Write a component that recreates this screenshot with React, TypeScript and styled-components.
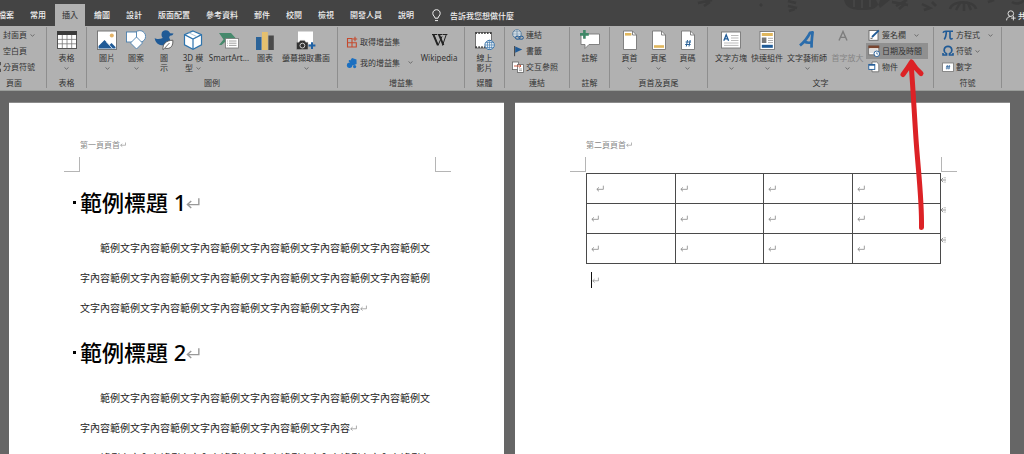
import React from "react";
import styled, { createGlobalStyle, css } from "styled-components";

const GlobalStyle = createGlobalStyle`
  *, *::before, *::after { box-sizing: border-box; }
  html, body { margin: 0; padding: 0; }
  body {
    font-family: "Noto Sans", "Noto Sans CJK TC", sans-serif;
    font-size: 8px;
    color: #333;
    background: #666;
  }
  button { font: inherit; color: inherit; }
`;

/* ---------- Window ---------- */

const Window = styled.div`
  display: flex;
  flex-direction: column;
  height: 100vh;
  overflow: hidden;
  background: #666;
`;

const TitleBar = styled.header`
  position: relative;
  display: flex;
  align-items: stretch;
  justify-content: space-between;
  height: 26px;
  padding-top: 4px;
  overflow: hidden;
  background: #444;
  color: #f0f0f0;
`;

const TabList = styled.nav`
  display: flex;
  margin-left: -10px;
`;

const Tab = styled.button<{ $active?: boolean }>`
  margin: 0 1px;
  padding: 0 7px;
  border: 0;
  background: ${(p) => (p.$active ? "#b1b1b1" : "transparent")};
  color: ${(p) => (p.$active ? "#444" : "#f0f0f0")};
  font-weight: 500;
  line-height: 22px;
  white-space: nowrap;
`;

const BarButton = styled.button<{ $cut?: boolean }>`
  display: flex;
  align-items: center;
  gap: 9px;
  margin-left: 10px;
  padding: 0;
  border: 0;
  background: transparent;
  font-weight: 500;
  white-space: nowrap;
  ${(p) =>
    p.$cut &&
    css`
      gap: 2px;
      margin-right: -10px;
      z-index: 1;
    `}
`;

const Doodles = styled.svg`
  position: absolute;
  top: 0;
  right: 0;
`;

/* ---------- Ribbon ---------- */

const Ribbon = styled.div`
  display: flex;
  padding: 1px 0 2px;
  background: #b1b1b1;
  border-bottom: 1px solid #9a9d9a;
`;

const Group = styled.section<{ $w: number; $cut?: boolean }>`
  display: flex;
  flex-direction: column;
  flex: 0 0 ${(p) => p.$w}px;
  height: 61px;
  border-right: 1px solid #8e8e8e;
  margin-left: ${(p) => (p.$cut ? "-18px" : "0")};
`;

const GroupBody = styled.div<{ $pad?: number }>`
  display: flex;
  height: 51px;
  padding-left: ${(p) => p.$pad ?? 0}px;
`;

const GroupLabel = styled.div`
  line-height: 10px;
  text-align: center;
`;

const BigButton = styled.button<{ $w: number }>`
  display: flex;
  flex-direction: column;
  align-items: center;
  width: ${(p) => p.$w}px;
  padding: 3px 0 0;
  border: 0;
  background: transparent;
  line-height: 10px;
  white-space: nowrap;
  &:disabled { color: #858585; }
`;

const IconSlot = styled.span`
  display: flex;
  align-items: center;
  justify-content: center;
  height: 20px;
  margin-bottom: 3px;
`;

const ChevronRow = styled.span`
  display: flex;
  align-items: center;
  justify-content: center;
  gap: 3px;
  height: 10px;
`;

const SmallColumn = styled.div<{ $top?: number }>`
  display: flex;
  flex-direction: column;
  padding-top: ${(p) => p.$top ?? 0}px;
`;

const SmallButton = styled.button<{ $h?: number; $hot?: boolean; $far?: boolean }>`
  position: relative;
  display: flex;
  align-items: center;
  height: ${(p) => p.$h ?? 16}px;
  padding: 0 6px 0 2px;
  border: 0;
  background: ${(p) => (p.$hot ? "#909090" : "transparent")};
  line-height: 10px;
  white-space: nowrap;
  & > span { margin: 0 ${(p) => (p.$far ? 8 : 3)}px 0 2px; }
  ${(p) => p.$hot && "padding-right: 3px;"}
`;

const Pointer = styled.svg`
  position: absolute;
  left: 32px;
  top: 14px;
  z-index: 5;
  pointer-events: none;
`;

/* ---------- Document ---------- */

const Workspace = styled.main`
  display: grid;
  grid-template-columns: 1fr 1fr;
  gap: 11px;
  flex: 1;
  min-height: 0;
  padding: 11px 14px 0 9px;
`;

const Page = styled.article`
  padding: 36px 69px 0 71px;
  background: #fff;
  border-top: 1px solid #8b8b8b;
  color: #222;
`;

const PageHeader = styled.div`
  color: #8a8a8a;
  line-height: 12px;
`;

const CropMarks = styled.div`
  display: flex;
  justify-content: space-between;
  height: 15px;
  margin: 6px -16px 0;
  padding: 0;
`;

const Corner = styled.span<{ $side: "left" | "right" }>`
  width: 16px;
  border: 0 solid #b5b5b5;
  border-width: ${(p) => (p.$side === "left" ? "0 1px 1px 0" : "0 0 1px 1px")};
`;

const PageBody = styled.div`
  display: flow-root;
  padding-top: 1px;
`;

const Heading = styled.h1`
  position: relative;
  margin: 12px 0 14px;
  color: #000;
  font-size: 22px;
  font-weight: 500;
  line-height: 34px;
  white-space: nowrap;
  &::before {
    content: "";
    position: absolute;
    left: -7px;
    top: 16px;
    width: 3px;
    height: 3px;
    background: #000;
  }
`;

const Paragraph = styled.p`
  margin: 0;
  font-size: 10px;
  line-height: 30px;
  text-indent: 20px;
`;

const DocTable = styled.table`
  width: 100%;
  border-collapse: collapse;
  table-layout: fixed;
`;

const Cell = styled.td<{ $indent?: boolean }>`
  position: relative;
  height: 30px;
  padding: 3px 0 0 ${(p) => (p.$indent ? 9 : 4)}px;
  border: 1px solid #4a4a4a;
  line-height: 10px;
`;

const RowEnd = styled.span`
  position: absolute;
  left: 100%;
  top: 2px;
`;

const CaretLine = styled.p`
  display: flex;
  align-items: center;
  width: 12px;
  height: 16px;
  margin: 8px 0 0 5px;
  border-left: 1px solid #111;
`;

/* ---------- Glyphs ---------- */

const Chevron = () => (
  <svg width="5" height="3" viewBox="0 0 5 3" aria-hidden="true">
    <path d="M0.5 0.5 L2.5 2.2 L4.5 0.5" fill="none" stroke="#666" strokeWidth="0.9" />
  </svg>
);

const ReturnMark = ({ size = 8, color = "#888" }: { size?: number; color?: string }) => (
  <svg width={size} height={size} viewBox="0 0 12 12" aria-hidden="true">
    <path d="M11 1 V6.5 H1.5 M4.5 3.5 L1.2 6.5 L4.5 9.5" fill="none" stroke={color} strokeWidth="1.2" />
  </svg>
);

const EndMark = () => (
  <svg width="7" height="8" viewBox="0 0 7 8" aria-hidden="true">
    <path d="M6 4 H1 M3.2 1.8 L1 4 L3.2 6.2 M5 1.2 V2.4 M5 5.6 V6.6" fill="none" stroke="#888" strokeWidth="0.9" />
  </svg>
);

const Svg = ({ w = 20, h = 20, children }: { w?: number; h?: number; children: React.ReactNode }) => (
  <svg width={w} height={h} viewBox={`0 0 ${w} ${h}`} fill="none" aria-hidden="true">
    {children}
  </svg>
);

const TableIcon = () => (
  <Svg>
    <rect x="0.5" y="1.5" width="19" height="17" fill="#fff" stroke="#555" />
    <rect x="0" y="1" width="20" height="4" fill="#3a3a3a" />
    <path d="M5.3 5 V18 M10 5 V18 M14.7 5 V18 M1 9.4 H19 M1 13.8 H19" stroke="#777" strokeWidth="0.8" />
  </Svg>
);
const PictureIcon = () => (
  <Svg>
    <rect x="0.5" y="1" width="19" height="18.5" fill="#fff" stroke="#777" />
    <circle cx="14.8" cy="5.5" r="2" fill="#e3b265" />
    <path d="M1.5 18.5 V16 L7.5 10 L12.5 15 L14.5 13 L18.5 17 V18.5 Z" fill="#1f5a96" />
    <path d="M9.5 12 L15.5 18.5" stroke="#fff" strokeWidth="0.8" />
  </Svg>
);
const ShapesIcon = () => (
  <Svg>
    <circle cx="13.8" cy="6.4" r="5.8" fill="#fff" stroke="#4a7fae" strokeWidth="0.9" />
    <rect x="0.5" y="2" width="10" height="10" fill="#fff" stroke="#4a7fae" strokeWidth="0.9" />
    <path d="M10.5 7 L16.5 13 L10.5 19 L4.5 13 Z" fill="#fff" stroke="#4a7fae" strokeWidth="0.9" />
  </Svg>
);
const DuckIcon = () => (
  <Svg>
    <path d="M7.5 4.5 C7.5 1.5 9.5 0.3 11.8 0.3 C14.2 0.3 15.7 1.8 16 3.3 L19.5 3.6 C19 5.3 17.8 5.8 16 5.8 C15.3 7 14.8 7.6 15.6 8.6 C18 12 14 15.5 9.5 15.5 C4.5 15.5 1 12.5 0.7 8 C2.5 9.6 6 9.3 8.8 8 C8 7 7.5 6 7.5 4.5 Z" fill="#1f5a96" />
    <path d="M9 19.5 C8.5 14 12 10.5 18.8 10.2 C19.3 15.5 17 19.5 11 18.2 M9 19.8 L15.5 13" fill="#fff" stroke="#555" strokeWidth="0.9" />
  </Svg>
);
const CubeIcon = () => (
  <Svg>
    <path d="M10 1 L18.5 4.6 V14.8 L10 19.3 L1.5 14.8 V4.6 Z" fill="#fff" stroke="#2f74ad" strokeWidth="1.2" />
    <path d="M1.5 4.6 L10 9 L18.5 4.6 M10 9 V19" stroke="#2f74ad" strokeWidth="1.2" />
    <path d="M5.8 2.8 L14.2 6.8" stroke="#9cbcd6" strokeWidth="0.8" />
  </Svg>
);
const SmartArtIcon = () => (
  <Svg>
    <path d="M0 3 H12 L16.5 8 V12 H6 L2.5 15 H0 L4.5 9.5 Z" fill="#46896c" />
    <rect x="6.5" y="8.5" width="13" height="9.5" fill="#fff" stroke="#777" strokeWidth="0.8" />
    <path d="M10 11 H17.5 M10 13.2 H17.5 M10 15.4 H17.5 M8 11 H8.8 M8 13.2 H8.8 M8 15.4 H8.8" stroke="#888" strokeWidth="0.8" />
  </Svg>
);
const ChartIcon = () => (
  <Svg>
    <rect x="1" y="7" width="5.4" height="13" fill="#2b6398" />
    <rect x="7" y="2" width="5.8" height="18" fill="#e5c06e" />
    <rect x="13.4" y="5.5" width="5.4" height="14.5" fill="#4a4a4a" />
  </Svg>
);
const ScreenshotIcon = () => (
  <Svg>
    <rect x="2" y="1.5" width="15" height="13" fill="#fff" />
    <path d="M0.5 12.2 H3 L4.2 10.4 H8.6 L9.8 12.2 H12 V19.6 H0.5 Z" fill="#333" stroke="#b1b1b1" strokeWidth="0.5" />
    <circle cx="6.4" cy="15.6" r="2.4" fill="#333" stroke="#ddd" strokeWidth="0.9" />
    <path d="M16 12.2 V19 M12.6 15.6 H19.4" stroke="#1f62a5" strokeWidth="2" />
  </Svg>
);
const WikipediaIcon = () => (
  <Svg>
    <path d="M3 4.5 H8.3 M4.6 4.6 L9 15.4 L13 6.4 M9 4.5 H13.4" stroke="#222" strokeWidth="1" />
    <path d="M4.4 4.6 L8.8 15.2 M10 4.6 L14.4 15.2" stroke="#222" strokeWidth="1.9" />
    <path d="M13.5 15.4 L17.2 4.8 M13.8 4.5 H18.4" stroke="#222" strokeWidth="1" />
  </Svg>
);
const VideoIcon = () => (
  <Svg>
    <rect x="0.5" y="2.5" width="16" height="15.5" fill="#fff" stroke="#555" strokeWidth="0.8" />
    <path d="M0.5 3.2 H16.5 M0.5 17.2 H16.5" stroke="#333" strokeWidth="1.8" strokeDasharray="1.4 1.5" />
    <circle cx="14.6" cy="15" r="4.7" fill="#fff" stroke="#3f79ad" />
    <path d="M9.9 15 H19.3 M14.6 10.3 V19.7 M10.8 12.6 H18.4 M10.8 17.4 H18.4" stroke="#3f79ad" strokeWidth="0.7" />
    <ellipse cx="14.6" cy="15" rx="2.2" ry="4.7" stroke="#3f79ad" strokeWidth="0.7" />
  </Svg>
);
const CommentIcon = () => (
  <Svg>
    <path d="M1 4 H19.5 V14.5 H9 L5 18.5 V14.5 H1 Z" fill="#fff" stroke="#777" strokeWidth="0.9" />
    <path d="M4.4 0 V8.8 M0 4.4 H8.8" stroke="#3f8767" strokeWidth="2.6" />
  </Svg>
);
const pageOutline = "M3.5 1 H12.5 L16.5 5 V19.5 H3.5 Z";
const HeaderIcon = () => (
  <Svg>
    <path d={pageOutline} fill="#fff" stroke="#777" strokeWidth="0.9" />
    <path d="M12.5 1 V5 H16.5" stroke="#777" strokeWidth="0.9" />
    <rect x="5" y="3" width="6.4" height="2.6" fill="#e0b65c" />
  </Svg>
);
const FooterIcon = () => (
  <Svg>
    <path d={pageOutline} fill="#fff" stroke="#777" strokeWidth="0.9" />
    <path d="M12.5 1 V5 H16.5" stroke="#777" strokeWidth="0.9" />
    <rect x="5" y="15.2" width="10" height="2.6" fill="#e0b65c" />
  </Svg>
);
const PageNumberIcon = () => (
  <Svg>
    <path d={pageOutline} fill="#fff" stroke="#777" strokeWidth="0.9" />
    <path d="M12.5 1 V5 H16.5" stroke="#777" strokeWidth="0.9" />
    <path d="M9.5 10 L8.3 16.5 M12.2 10 L11 16.5 M7.6 12 H13 M7.2 14.5 H12.6" stroke="#2b6398" strokeWidth="1" />
  </Svg>
);
const TextBoxIcon = () => (
  <Svg>
    <rect x="0.5" y="2" width="19" height="16" fill="#fff" stroke="#777" strokeWidth="0.9" />
    <path d="M2.8 10.8 L5.2 4.8 L7.6 10.8 M3.6 8.8 H6.8" stroke="#1f5a96" strokeWidth="1.3" />
    <path d="M10 5.5 H17.5 M10 8 H17.5 M10 10.5 H17.5 M3 13 H17.5 M3 15.4 H17.5" stroke="#aaa" strokeWidth="0.8" />
  </Svg>
);
const QuickPartsIcon = () => (
  <Svg>
    <rect x="3" y="1.5" width="14.5" height="18" fill="#fff" stroke="#777" strokeWidth="0.9" />
    <rect x="4.8" y="3" width="11" height="3" fill="#e0b65c" />
    <rect x="4.8" y="7.5" width="4.6" height="5.5" fill="#777" />
    <path d="M11 8.3 H16 M11 10.5 H16 M11 12.6 H16" stroke="#999" strokeWidth="0.8" />
    <rect x="4.8" y="14.8" width="11" height="3" fill="#1f5a96" />
  </Svg>
);
const WordArtIcon = () => (
  <Svg>
    <path d="M3 15.5 C7 12 11 7 13 2.8 L15.6 2.3 C15 7.5 14.3 12.5 14.6 17.6 M7.2 11.8 C9.5 12.8 12 13 14.8 12.4" stroke="#2a6cab" strokeWidth="2.7" strokeLinejoin="round" />
  </Svg>
);
const DropCapIcon = () => (
  <Svg>
    <path d="M1 10.5 L5 1.5 L9 10.5 M2.6 7.4 H7.4" stroke="#7d7d7d" strokeWidth="1.4" />
  </Svg>
);

const AddinStoreIcon = () => (
  <Svg w={12} h={12}>
    <path d="M1.5 2.5 H6 V11 H1.5 Z M1.5 6.7 H10.3 V11 H6 M6 5 V6.7" stroke="#c5492d" strokeWidth="1.1" />
    <path d="M9 0.8 V5.2 M6.8 3 H11.2" stroke="#c5492d" strokeWidth="1.1" />
  </Svg>
);
const MyAddinsIcon = () => (
  <Svg w={12} h={12}>
    <path d="M3.6 4.5 L6 1 L10.5 2.4 L10.6 7 L7 8.6 L4 7 Z" fill="#1b6fc0" />
    <circle cx="3.6" cy="8.2" r="2.7" fill="#1b6fc0" />
    <circle cx="8.6" cy="9.6" r="1.6" fill="#1b6fc0" />
    <circle cx="3.6" cy="4" r="0.9" fill="#1b6fc0" />
  </Svg>
);
const LinkIcon = () => (
  <Svg w={12} h={12}>
    <circle cx="5" cy="5" r="4.3" fill="#e9eef2" stroke="#51789b" strokeWidth="0.9" />
    <path d="M0.8 5 H9.2 M5 0.8 V9 M1.5 2.8 H8.5 M1.5 7.2 H6" stroke="#51789b" strokeWidth="0.6" />
    <rect x="3.5" y="7.2" width="4.6" height="3" rx="1.5" fill="#b1b1b1" stroke="#1f5a96" />
    <rect x="6.8" y="7.2" width="4.6" height="3" rx="1.5" stroke="#1f5a96" />
  </Svg>
);
const BookmarkIcon = () => (
  <Svg w={12} h={12}>
    <path d="M2.6 1 V11.2" stroke="#444" strokeWidth="1" />
    <path d="M3.2 1.4 L10.2 4.4 L3.2 7.8 Z" fill="#1f5a96" />
  </Svg>
);
const CrossRefIcon = () => (
  <Svg w={12} h={12}>
    <rect x="0.5" y="1" width="6" height="7.6" fill="#fff" stroke="#666" strokeWidth="0.8" />
    <rect x="5.4" y="3.6" width="6" height="7.8" fill="#fff" stroke="#666" strokeWidth="0.8" />
    <path d="M2 5 H9 M7.4 3.6 L9 5 L7.4 6.4" stroke="#c5492d" strokeWidth="0.9" />
    <path d="M7 8 H10 M7 9.6 H10" stroke="#888" strokeWidth="0.7" />
  </Svg>
);
const BreakIcon = () => (
  <Svg w={12} h={12}>
    <path d="M6 1 V4 H11.5 V1 M6 11 V8 H11.5 V11" fill="#fff" stroke="#555" />
    <path d="M6 6 H12" stroke="#1f5a96" strokeDasharray="2 1" />
  </Svg>
);
const BlankPageIcon = () => (
  <Svg w={12} h={12}>
    <path d="M1.5 1 H7 L9.5 3.5 V11 H1.5 Z" fill="#fff" stroke="#666" strokeWidth="0.9" />
  </Svg>
);
const SignatureIcon = () => (
  <Svg w={12} h={12}>
    <rect x="1" y="1.5" width="9" height="9.8" fill="#fff" stroke="#666" strokeWidth="0.9" />
    <path d="M4 8 L10.8 1.4" stroke="#1f5a96" strokeWidth="1.8" />
    <path d="M2.5 9.3 H4.5" stroke="#444" strokeWidth="0.9" />
  </Svg>
);
const DateIcon = () => (
  <Svg w={12} h={12}>
    <rect x="0.8" y="1" width="10" height="8.8" fill="#fff" stroke="#666" strokeWidth="0.8" />
    <rect x="0.4" y="0.6" width="10.8" height="2.6" fill="#7a4630" />
    <path d="M2.4 5 H9.4 M2.4 7 H7" stroke="#888" strokeWidth="0.9" strokeDasharray="1.2 0.8" />
    <circle cx="8.8" cy="8.8" r="2.8" fill="#fff" stroke="#1f5a96" strokeWidth="0.9" />
    <path d="M8.8 7.2 V9 H10.2" stroke="#1f5a96" strokeWidth="0.7" />
  </Svg>
);
const ObjectIcon = () => (
  <Svg w={12} h={12}>
    <path d="M4 1 H8.6 L10.8 3.2 V10.8 H4 Z" fill="#fff" stroke="#666" strokeWidth="0.8" />
    <rect x="0.8" y="3.4" width="6" height="5" fill="#fff" stroke="#1f5a96" strokeWidth="0.9" />
    <path d="M0.8 4 H6.8" stroke="#1f5a96" strokeWidth="1.4" />
  </Svg>
);
const PiIcon = () => (
  <Svg w={12} h={12}>
    <path d="M1 3.8 C1.6 2.4 2.4 2.2 3.6 2.2 H11 M4.4 2.4 C4.2 6 3.8 8.6 2.2 10.4 M8 2.4 V8.6 C8 10.2 9.6 10.4 10.6 9.2" stroke="#1f5a96" strokeWidth="1.6" />
  </Svg>
);
const OmegaIcon = () => (
  <Svg w={12} h={12}>
    <path d="M1 8 V10 H4.6 V8.8 C0.6 6.6 1.8 1.4 6 1.4 C10.2 1.4 11.4 6.6 7.4 8.8 V10 H11 V8" stroke="#1f5a96" strokeWidth="1.6" />
  </Svg>
);
const NumberIcon = () => (
  <Svg w={12} h={12}>
    <rect x="0.6" y="2" width="10.8" height="8.4" fill="#fff" stroke="#777" strokeWidth="0.8" />
    <path d="M5.4 4 L4.8 8.4 M7.4 4 L6.8 8.4 M4 5.4 H8.2 M3.8 7 H8" stroke="#1f5a96" strokeWidth="0.7" />
  </Svg>
);
const BulbIcon = () => (
  <Svg w={9} h={13}>
    <path d="M3 9.2 C3 7.4 0.8 6.8 0.8 4.4 C0.8 2.2 2.4 0.7 4.5 0.7 C6.6 0.7 8.2 2.2 8.2 4.4 C8.2 6.8 6 7.4 6 9.2 Z M3 11.6 H6" stroke="#f0f0f0" strokeWidth="1" />
  </Svg>
);
const PersonIcon = () => (
  <Svg w={10} h={11}>
    <circle cx="4.8" cy="3.6" r="2.8" stroke="#eee" strokeWidth="0.9" />
    <path d="M0.6 10.4 C0.6 8 2.2 6.6 4.6 6.5 M7.4 5.8 V10.4 M5.1 8.1 H9.7" stroke="#eee" strokeWidth="0.9" />
  </Svg>
);

/* ---------- Content ---------- */

const tabs = ["檔案", "常用", "插入", "繪圖", "設計", "版面配置", "參考資料", "郵件", "校閱", "檢視", "開發人員", "說明"];
const sample = (times: number) => "範例文字內容".repeat(times);

type BigProps = {
  icon: React.ReactNode;
  w: number;
  label: string;
  second?: string;
  menu?: boolean;
  disabled?: boolean;
};
const Big = ({ icon, w, label, second, menu, disabled }: BigProps) => (
  <BigButton $w={w} disabled={disabled}>
    <IconSlot>{icon}</IconSlot>
    <span>{label}</span>
    {(second || menu) && (
      <ChevronRow>
        {second}
        {menu && <Chevron />}
      </ChevronRow>
    )}
  </BigButton>
);

type SmallProps = {
  icon: React.ReactNode;
  label: string;
  menu?: boolean;
  far?: boolean;
  hot?: boolean;
  h?: number;
  children?: React.ReactNode;
};
const Small = ({ icon, label, menu, far, hot, h, children }: SmallProps) => (
  <SmallButton $far={far} $hot={hot} $h={h}>
    {icon}
    <span>{label}</span>
    {menu && <Chevron />}
    {children}
  </SmallButton>
);

const RedArrow = () => (
  <Pointer width="30" height="176" viewBox="0 0 30 176" fill="none" aria-hidden="true">
    <path
      d="M23.5 170.5 C24 142 20 112 18 82 C16 52 15 30 13 6 M5 17.5 C8 13.5 11 9 13.5 5 C16 9 19 13 23 16.5"
      stroke="#dc2226"
      strokeWidth="5"
      strokeLinecap="round"
      strokeLinejoin="round"
    />
  </Pointer>
);

export default function App() {
  return (
    <>
      <GlobalStyle />
      <Window>
        <TitleBar>
          <Doodles width="330" height="26" viewBox="0 0 330 26" fill="none" aria-hidden="true">
            <path
              d="M4 3 L18 0 M10 6 L16 2 M66 4 L68 6 M94 1 L102 3 M94 6 L103 8 M95 11 L101 9 M202 6 L213 0 M205 9 L212 3 M198 2 L214 5 M228 4 L236 8 L230 10 M238 2 L242 6 M256 9 C258 0 280 0 282 9 M262 10 L266 3 M270 11 V2 M277 10 L274 3 M294 2 L300 0 M318 2 C322 5 328 3 330 0"
              stroke="#3b3b3b"
              strokeWidth="2.5"
            />
            <path d="M150 0 H186 C184 9 178 10 168 10 C158 10 152 8 150 0 Z M186 8 L196 0 H182 Z" fill="#3b3b3b" />
            <path d="M160 0 V7 M168 0 V8 M176 0 V7" stroke="#444" strokeWidth="2" />
          </Doodles>
          <TabList>
            {tabs.map((t) => (
              <Tab key={t} $active={t === "插入"}>
                {t}
              </Tab>
            ))}
            <BarButton>
              <BulbIcon />
              告訴我您想做什麼
            </BarButton>
          </TabList>
          <BarButton $cut>
            <PersonIcon />
            共用
          </BarButton>
        </TitleBar>

        <Ribbon>
          <Group $w={65} $cut>
            <GroupBody $pad={5}>
              <SmallColumn>
                <Small icon={<BlankPageIcon />} label="封面頁" menu />
                <Small icon={<BlankPageIcon />} label="空白頁" />
                <Small icon={<BreakIcon />} label="分頁符號" />
              </SmallColumn>
            </GroupBody>
            <GroupLabel>頁面</GroupLabel>
          </Group>

          <Group $w={40}>
            <GroupBody>
              <Big w={39} icon={<TableIcon />} label="表格" menu />
            </GroupBody>
            <GroupLabel>表格</GroupLabel>
          </Group>

          <Group $w={251}>
            <GroupBody $pad={5}>
              <Big w={30} icon={<PictureIcon />} label="圖片" menu />
              <Big w={28} icon={<ShapesIcon />} label="圖案" menu />
              <Big w={28} icon={<DuckIcon />} label="圖" second="示" />
              <Big w={30} icon={<CubeIcon />} label="3D 模" second="型" menu />
              <Big w={42} icon={<SmartArtIcon />} label="SmartArt..." />
              <Big w={30} icon={<ChartIcon />} label="圖表" />
              <Big w={52} icon={<ScreenshotIcon />} label="螢幕擷取畫面" menu />
            </GroupBody>
            <GroupLabel>圖例</GroupLabel>
          </Group>

          <Group $w={127}>
            <GroupBody $pad={6}>
              <SmallColumn $top={4}>
                <Small h={21} icon={<AddinStoreIcon />} label="取得增益集" />
                <Small h={21} icon={<MyAddinsIcon />} label="我的增益集" menu far />
              </SmallColumn>
              <Big w={40} icon={<WikipediaIcon />} label="Wikipedia" />
            </GroupBody>
            <GroupLabel>增益集</GroupLabel>
          </Group>

          <Group $w={40}>
            <GroupBody>
              <Big w={39} icon={<VideoIcon />} label="線上" second="影片" />
            </GroupBody>
            <GroupLabel>媒體</GroupLabel>
          </Group>

          <Group $w={65}>
            <GroupBody $pad={5}>
              <SmallColumn>
                <Small icon={<LinkIcon />} label="連結" />
                <Small icon={<BookmarkIcon />} label="書籤" />
                <Small icon={<CrossRefIcon />} label="交互參照" />
              </SmallColumn>
            </GroupBody>
            <GroupLabel>連結</GroupLabel>
          </Group>

          <Group $w={40}>
            <GroupBody>
              <Big w={39} icon={<CommentIcon />} label="註解" />
            </GroupBody>
            <GroupLabel>註解</GroupLabel>
          </Group>

          <Group $w={98}>
            <GroupBody $pad={5}>
              <Big w={29} icon={<HeaderIcon />} label="頁首" menu />
              <Big w={29} icon={<FooterIcon />} label="頁尾" menu />
              <Big w={29} icon={<PageNumberIcon />} label="頁碼" menu />
            </GroupBody>
            <GroupLabel>頁首及頁尾</GroupLabel>
          </Group>

          <Group $w={226}>
            <GroupBody $pad={5}>
              <Big w={36} icon={<TextBoxIcon />} label="文字方塊" menu />
              <Big w={36} icon={<QuickPartsIcon />} label="快速組件" menu />
              <Big w={44} icon={<WordArtIcon />} label="文字藝術師" menu />
              <Big w={37} icon={<DropCapIcon />} label="首字放大" menu disabled />
              <SmallColumn>
                <Small icon={<SignatureIcon />} label="簽名欄" menu far />
                <Small icon={<DateIcon />} label="日期及時間" hot>
                  <RedArrow />
                </Small>
                <Small icon={<ObjectIcon />} label="物件" />
              </SmallColumn>
            </GroupBody>
            <GroupLabel>文字</GroupLabel>
          </Group>

          <Group $w={68}>
            <GroupBody $pad={6}>
              <SmallColumn>
                <Small icon={<PiIcon />} label="方程式" menu far />
                <Small icon={<OmegaIcon />} label="符號" menu />
                <Small icon={<NumberIcon />} label="數字" />
              </SmallColumn>
            </GroupBody>
            <GroupLabel>符號</GroupLabel>
          </Group>
        </Ribbon>

        <Workspace>
          <Page>
            <PageHeader>
              第一頁頁首
              <ReturnMark size={6} />
            </PageHeader>
            <CropMarks>
              <Corner $side="left" />
              <Corner $side="right" />
            </CropMarks>
            <PageBody>
              <Heading>
                範例標題 1<ReturnMark size={14} color="#999" />
              </Heading>
              <Paragraph>
                {sample(16)}
                <ReturnMark size={7} />
              </Paragraph>
              <Heading as="h2">
                範例標題 2<ReturnMark size={14} color="#999" />
              </Heading>
              <Paragraph>
                {sample(10)}
                <ReturnMark size={7} />
              </Paragraph>
              <Paragraph>{sample(16)}</Paragraph>
            </PageBody>
          </Page>

          <Page>
            <PageHeader>
              第二頁頁首
              <ReturnMark size={6} />
            </PageHeader>
            <CropMarks>
              <Corner $side="left" />
              <Corner $side="right" />
            </CropMarks>
            <PageBody>
              <DocTable>
                <tbody>
                  {[0, 1, 2].map((row) => (
                    <tr key={row}>
                      {[0, 1, 2, 3].map((col) => (
                        <Cell key={col} $indent={row === 0 && col === 0}>
                          <ReturnMark />
                          {col === 3 && (
                            <RowEnd>
                              <EndMark />
                            </RowEnd>
                          )}
                        </Cell>
                      ))}
                    </tr>
                  ))}
                </tbody>
              </DocTable>
              <CaretLine>
                <ReturnMark size={7} />
              </CaretLine>
            </PageBody>
          </Page>
        </Workspace>
      </Window>
    </>
  );
}
